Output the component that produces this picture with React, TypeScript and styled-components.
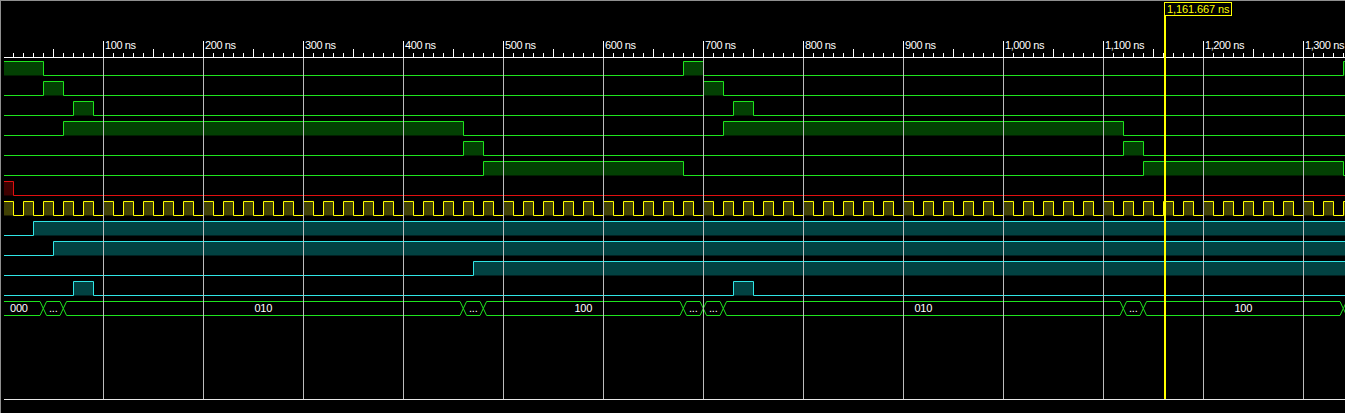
import React from "react";
import styled, { createGlobalStyle } from "styled-components";

const W = 1345;
const T0 = 3.3;
const END = 100000;
const px = (t: number) => Math.round(T0 + t);
const cx = (t: number) => px(t) + 0.5;

type Kind = "green" | "red" | "yellow" | "cyan";
const palette: Record<Kind, { line: string; fill: string }> = {
  green: { line: "#1ee41e", fill: "#034003" },
  red: { line: "#e01010", fill: "#3f0000" },
  yellow: { line: "#ffff00", fill: "#414104" },
  cyan: { line: "#30e6e6", fill: "#024242" },
};

type Interval = [number, number];
interface RowSpec {
  kind: Kind;
  highs: Interval[];
}

const clock: Interval[] = [];
for (let k = 0; 20 * k < W; k++) clock.push([20 * k, 20 * k + 10]);

const rows: RowSpec[] = [
  { kind: "green", highs: [[0, 40], [680, 700], [1340, END]] },
  { kind: "green", highs: [[40, 60], [700, 720]] },
  { kind: "green", highs: [[70, 90], [730, 750]] },
  { kind: "green", highs: [[60, 460], [720, 1120]] },
  { kind: "green", highs: [[460, 480], [1120, 1140]] },
  { kind: "green", highs: [[480, 680], [1140, 1340]] },
  { kind: "red", highs: [[0, 10]] },
  { kind: "yellow", highs: clock },
  { kind: "cyan", highs: [[30, END]] },
  { kind: "cyan", highs: [[50, END]] },
  { kind: "cyan", highs: [[470, END]] },
  { kind: "cyan", highs: [[70, 90], [730, 750]] },
];

interface BusSeg {
  from: number;
  to: number;
  label: string;
  anchorX?: number;
}
const busSegs: BusSeg[] = [
  { from: 0, to: 40, label: "000", anchorX: 10 },
  { from: 40, to: 60, label: "..." },
  { from: 60, to: 460, label: "010" },
  { from: 460, to: 480, label: "..." },
  { from: 480, to: 680, label: "100" },
  { from: 680, to: 700, label: "..." },
  { from: 700, to: 720, label: "..." },
  { from: 720, to: 1120, label: "010" },
  { from: 1120, to: 1140, label: "..." },
  { from: 1140, to: 1340, label: "100" },
  { from: 1340, to: END, label: "" },
];

const HI = 1.5;
const LO = 15.5;
const MID = 8.5;
const XW = 3.3;

const Global = createGlobalStyle`
  html, body { margin: 0; padding: 0; background: #000; }
  #root { width: 1345px; height: 413px; }
`;

const Viewer = styled.div`
  position: relative;
  width: 1345px;
  height: 413px;
  background: #000;
  box-shadow: inset 1px 1px 0 #8f8f8f;
  display: flex;
  flex-direction: column;
  overflow: hidden;
  font-family: "Liberation Sans", Arial, sans-serif;
`;

const CursorStrip = styled.div`
  position: relative;
  height: 17px;
  flex: none;
`;

const CursorLabel = styled.div`
  position: absolute;
  top: 2px;
  height: 14px;
  box-sizing: border-box;
  border: 1px solid #ffff00;
  padding: 0 2px;
  background: #000;
  color: #ffff00;
  font-size: 11px;
  line-height: 12px;
  letter-spacing: -0.1px;
  white-space: nowrap;
  z-index: 4;
`;

const CursorLine = styled.div`
  position: absolute;
  top: 16px;
  width: 2px;
  height: 383px;
  background: #ffff00;
  z-index: 3;
`;

const Ruler = styled.svg`
  display: block;
  flex: none;
  width: 1345px;
  height: 41px;
  text {
    font-family: "Liberation Sans", Arial, sans-serif;
    font-size: 11px;
    letter-spacing: -0.4px;
    fill: #ffffff;
  }
`;

const WavePane = styled.div`
  position: relative;
  flex: none;
  height: 341px;
`;

const RowStack = styled.div`
  display: flex;
  flex-direction: column;
  padding-top: 2px;
`;

const WaveSvg = styled.svg`
  display: block;
  width: 1345px;
  height: 20px;
  flex: none;
  text {
    font-family: "Liberation Sans", Arial, sans-serif;
    font-size: 11px;
    letter-spacing: -0.2px;
    fill: #ffffff;
  }
`;

const GridOverlay = styled.svg`
  position: absolute;
  left: 0;
  top: 0;
  width: 1345px;
  height: 341px;
  pointer-events: none;
  z-index: 1;
`;

const BottomRule = styled.div`
  flex: none;
  height: 1px;
  margin-left: 4px;
  background: #e6e6e6;
`;

const xs = (t: number) => (t <= 0 ? 4 : t >= END ? W : cx(t));

function DigitalRow({ kind, highs }: RowSpec) {
  const c = palette[kind];
  const pts: [number, number][] = [];
  const startsHigh = highs.length > 0 && highs[0][0] <= 0;
  pts.push([4, startsHigh ? HI : LO]);
  let level = startsHigh ? HI : LO;
  for (const [a, b] of highs) {
    const xa = xs(a);
    const xb = xs(b);
    if (a > 0) {
      pts.push([xa, LO], [xa, HI]);
    }
    pts.push([xb, HI]);
    level = HI;
    if (b < END) {
      pts.push([xb, LO]);
      level = LO;
    }
  }
  pts.push([W, level]);
  const d = pts.map((p, i) => `${i ? "L" : "M"}${p[0]} ${p[1]}`).join(" ");
  return (
    <WaveSvg viewBox={`0 0 ${W} 20`}>
      {highs.map(([a, b], i) => (
        <rect key={i} x={xs(a)} y={HI} width={xs(b) - xs(a)} height={LO - HI} fill={c.fill} />
      ))}
      <path d={d} fill="none" stroke={c.line} strokeWidth={1} />
    </WaveSvg>
  );
}

function BusRow({ segs }: { segs: BusSeg[] }) {
  const line = palette.green.line;
  return (
    <WaveSvg viewBox={`0 0 ${W} 20`}>
      {segs.map((s, i) => {
        const xa = s.from <= 0 ? 4 : px(s.from) + 0.3;
        const xb = s.to >= END ? W + 1 : px(s.to) + 0.3;
        const la = s.from <= 0 ? xa : xa + XW;
        const lb = s.to >= END ? xb : xb - XW;
        const d =
          s.from <= 0
            ? `M${xa} ${HI} L${lb} ${HI} L${xb} ${MID} L${lb} ${LO} L${xa} ${LO}`
            : `M${xa} ${MID} L${la} ${HI} L${lb} ${HI} L${xb} ${MID} L${lb} ${LO} L${la} ${LO} Z`;
        const tx = s.anchorX ?? (xa + xb) / 2;
        return (
          <g key={i}>
            <path d={d} fill="none" stroke={line} strokeWidth={1} />
            {s.label && (
              <text x={tx} y={12} textAnchor={s.anchorX ? "start" : "middle"}>
                {s.label}
              </text>
            )}
          </g>
        );
      })}
    </WaveSvg>
  );
}

function fmtNs(t: number) {
  return `${t.toLocaleString("en-US")} ns`;
}

function TimeRuler() {
  const ticks: React.ReactNode[] = [];
  for (let t = 10; T0 + t < W; t += 10) {
    const x = cx(t);
    const top = t % 100 === 0 ? 24 : t % 50 === 0 ? 32 : 36;
    ticks.push(<line key={t} x1={x} x2={x} y1={top} y2={40} stroke="#ffffff" strokeWidth={1} />);
  }
  const labels: React.ReactNode[] = [];
  for (let t = 100; T0 + t < W; t += 100) {
    labels.push(
      <text key={t} x={px(t) + 2} y={32}>
        {fmtNs(t)}
      </text>
    );
  }
  return (
    <Ruler viewBox={`0 0 ${W} 41`}>
      <line x1={4} x2={W} y1={40.5} y2={40.5} stroke="#ffffff" strokeWidth={1} />
      {ticks}
      {labels}
    </Ruler>
  );
}

function Grid() {
  const lines: React.ReactNode[] = [];
  for (let t = 100; T0 + t < W; t += 100) {
    const x = cx(t);
    lines.push(<line key={t} x1={x} x2={x} y1={0} y2={341} stroke="#bdbdbd" strokeWidth={1} />);
  }
  return <GridOverlay viewBox={`0 0 ${W} 341`}>{lines}</GridOverlay>;
}

export default function App() {
  const cursorT = 1161.667;
  const cursorX = Math.floor(T0 + cursorT);
  return (
    <>
      <Global />
      <Viewer>
        <CursorStrip>
          <CursorLabel style={{ left: cursorX }}>1,161.667 ns</CursorLabel>
        </CursorStrip>
        <TimeRuler />
        <WavePane>
          <RowStack>
            {rows.map((r, i) => (
              <DigitalRow key={i} kind={r.kind} highs={r.highs} />
            ))}
            <BusRow segs={busSegs} />
          </RowStack>
          <Grid />
        </WavePane>
        <BottomRule />
        <CursorLine style={{ left: cursorX }} />
      </Viewer>
    </>
  );
}
